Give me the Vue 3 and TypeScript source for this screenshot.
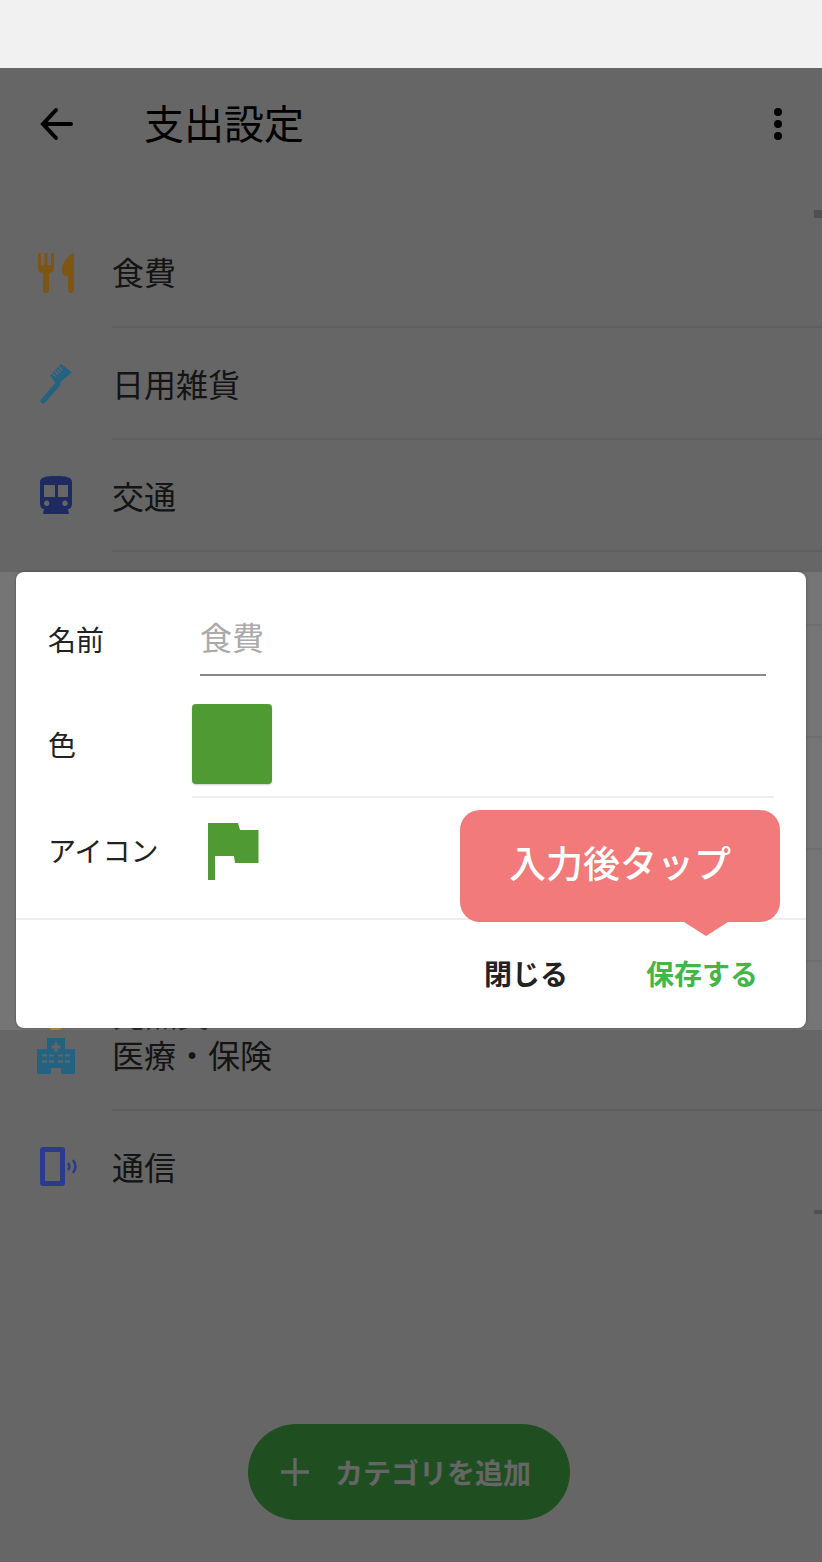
<script setup lang="ts">
interface Category {
  name: string
  icon: 'food' | 'brush' | 'train' | 'hospital' | 'phone'
  color: string
}

// icons sit above the scrim, so these are the already dimmed colours
const topRows: Category[] = [
  { name: '食費', icon: 'food', color: '#7d5514' },
  { name: '日用雑貨', icon: 'brush', color: '#246282' },
  { name: '交通', icon: 'train', color: '#1f2a62' },
]

const bottomRows: Category[] = [
  { name: '医療・保険', icon: 'hospital', color: '#246282' },
  { name: '通信', icon: 'phone', color: '#2b3a8c' },
]
</script>

<template>
  <div class="screen">
    <div class="status-bar"></div>

    <header class="top-bar">
      <svg class="back" viewBox="0 0 36 36" width="36" height="36">
        <path d="M33 18H6M18 4 5 18l13 14" fill="none" stroke="#000" stroke-width="4" stroke-linecap="round" />
      </svg>
      <h1 class="title">支出設定</h1>
      <div class="more"><i></i><i></i><i></i></div>
    </header>

    <div class="scroll-mark first"></div>

    <ul class="rows">
      <li v-for="row in topRows" :key="row.name" class="row">
        <span class="icon">
          <svg viewBox="0 0 48 48" width="48" height="48" :fill="row.color">
            <template v-if="row.icon === 'food'">
              <path d="M6 5h3v12h3.500V5h3v12H19V5h3v15c0 3-2 5-5 5.500V42a3 3 0 0 1-6 0V25.500C8 25 6 23 6 20z" />
              <path d="M42 5v37a3 3 0 0 1-6 0V28h-1c-3 0-5-3-5-6C30 15 36 7 42 5z" />
            </template>
            <template v-else-if="row.icon === 'brush'">
              <path d="M26 24 11 41" fill="none" :stroke="row.color" stroke-width="5" stroke-linecap="round" />
              <path fill-rule="evenodd" d="M29 4 40 12.300 25 25 18 15.700zM20.200 13.900l1-1 3.500 3.500-1 1zM22.300 11.800l1-1 3.500 3.500-1 1zM24.400 9.700l1-1 3.500 3.500-1 1zM26.500 7.600l1-1 3.500 3.500-1 1z" />
            </template>
            <template v-else>
              <path fill-rule="evenodd" d="M8 10c0-5 6-6 16-6s16 1 16 6v22c0 3-2 5-4 5l1 5H11l1-5c-2 0-4-2-4-5zM12 13v12h11V13zM26 13v12h10V13zM14.700 28.600a2.700 2.700 0 1 0 .01 0zM33 28.600a2.700 2.700 0 1 0 .01 0z" />
            </template>
          </svg>
        </span>
        <span class="label">{{ row.name }}</span>
      </li>
    </ul>

    <div class="hidden-rows">
      <div class="hidden-line short"></div>
      <div class="hidden-line"></div>
      <div class="hidden-line"></div>
      <div class="hidden-line"></div>
      <span class="peek-icon"></span>
      <span class="peek">光熱費</span>
    </div>

    <ul class="rows">
      <li v-for="row in bottomRows" :key="row.name" class="row">
        <span class="icon">
          <svg viewBox="0 0 48 48" width="48" height="48" :fill="row.color">
            <template v-if="row.icon === 'hospital'">
              <path fill-rule="evenodd" d="M15 7h18v11h10v25H29v-6H19v6H5V18h10zM22.500 11.500v3h-3v3h3v3h3v-3h3v-3h-3v-3zM10 23.500v2h5v-2zM17 23.500v2h5v-2zM26 23.500v2h5v-2zM33 23.500v2h5v-2zM10 29.500v2h5v-2zM17 29.500v2h5v-2zM26 29.500v2h5v-2zM33 29.500v2h5v-2z" />
            </template>
            <template v-else>
              <path fill-rule="evenodd" d="M11 4h19a3 3 0 0 1 3 3v33a3 3 0 0 1-3 3H11a3 3 0 0 1-3-3V7a3 3 0 0 1 3-3zm2 5v29h15V9z" />
              <path d="M36 20c1.500 2 1.500 5 0 7M41 17c3 4 3 9 0 13" fill="none" :stroke="row.color" stroke-width="2.500" />
            </template>
          </svg>
        </span>
        <span class="label">{{ row.name }}</span>
      </li>
    </ul>

    <div class="scroll-mark last"></div>

    <div class="fab">
      <svg viewBox="0 0 30 30" width="30" height="30">
        <path d="M15 1v28M1 15h28" fill="none" stroke="#fff" stroke-width="3.400" />
      </svg>
      <span>カテゴリを追加</span>
    </div>

    <div class="overlay"></div>
    <div class="band"></div>

    <section class="dialog">
      <div class="form">
        <div class="field name-field">
          <span class="field-label">名前</span>
          <div class="input">食費</div>
        </div>
        <div class="field color-field">
          <span class="field-label">色</span>
          <div class="color-line"><div class="swatch"></div></div>
        </div>
        <div class="field icon-field">
          <span class="field-label">アイコン</span>
          <svg class="flag" viewBox="0 0 52 58" width="52" height="58" fill="#4f9a33">
            <path d="M0 0h30l2 7h18.500v33H27l-1-7H7v24H0z" />
          </svg>
        </div>
      </div>
      <footer class="actions">
        <button class="action close">閉じる</button>
        <button class="action save">保存する</button>
      </footer>
      <div class="tip">入力後タップ</div>
    </section>
  </div>
</template>

<style>
html,
body {
  margin: 0;
  background: #fff;
}
</style>

<style scoped>
.screen {
  position: relative;
  width: 822px;
  height: 1562px;
  overflow: hidden;
  background: #fff;
  font-family: "Noto Sans CJK JP", "Noto Sans", sans-serif;
  color: #333;
}
.status-bar {
  height: 68px;
  background: #f1f1f1;
}
.top-bar {
  display: flex;
  align-items: center;
  height: 112px;
  padding: 0 40px 0 38px;
  color: #000;
}
.back {
  flex: none;
}
.title {
  margin: 0 0 4px 70px;
  font-size: 40px;
  font-weight: 400;
  flex: 1;
}
.more {
  display: flex;
  flex-direction: column;
  gap: 4px;
}
.more i {
  width: 8px;
  height: 8px;
  border-radius: 50%;
  background: #000;
}
.scroll-mark {
  position: absolute;
  right: 0;
  width: 8px;
  background: #c8c8c8;
}
.scroll-mark.first {
  top: 210px;
  height: 8px;
}
.scroll-mark.last {
  top: 1210px;
  height: 4px;
}
.rows {
  list-style: none;
  margin: 0;
  padding: 0;
}
.rows:first-of-type {
  margin-top: 36px;
}
.row {
  display: flex;
  align-items: center;
  height: 112px;
}
.icon {
  position: relative;
  z-index: 1;
  flex: none;
  display: flex;
  justify-content: center;
  width: 112px;
}
.label {
  flex: 1;
  align-self: stretch;
  display: flex;
  align-items: center;
  font-size: 32px;
  border-bottom: 2px solid #eee;
}
.row:last-child .label {
  border-bottom-color: transparent;
}
.rows:first-of-type .row:last-child .label {
  border-bottom-color: #eee;
}
.hidden-rows {
  position: relative;
  height: 447px;
}
.hidden-line {
  margin-left: 112px;
  height: 110px;
  border-bottom: 2px solid #eee;
}
.hidden-line.short {
  height: 72px;
}
.peek {
  position: absolute;
  left: 113px;
  top: 445px;
  font-size: 32px;
  line-height: 32px;
}
.peek-icon {
  position: absolute;
  z-index: 1;
  left: 48px;
  top: 468px;
  width: 15px;
  height: 10px;
  border-radius: 0 0 5px 5px;
  background: #b8963a;
}
.fab {
  position: absolute;
  left: 248px;
  top: 1424px;
  width: 322px;
  height: 96px;
  box-sizing: border-box;
  padding-left: 32px;
  display: flex;
  align-items: center;
  gap: 25px;
  border-radius: 48px;
  background: #4ec550;
  color: #fff;
  font-size: 28px;
  font-weight: 700;
}
.overlay {
  position: absolute;
  top: 68px;
  left: 0;
  right: 0;
  bottom: 0;
  background: rgba(0, 0, 0, 0.6);
}
.band {
  position: absolute;
  top: 572px;
  left: 0;
  right: 0;
  height: 458px;
  background: rgba(255, 255, 255, 0.1);
}
.dialog {
  position: absolute;
  z-index: 2;
  top: 572px;
  left: 16px;
  width: 790px;
  height: 456px;
  border-radius: 8px;
  background: #fff;
  box-shadow: 0 0 3px rgba(0, 0, 0, 0.35);
  display: flex;
  flex-direction: column;
}
.form {
  flex: 1;
  padding: 0 32px;
  border-bottom: 2px solid #eee;
}
.field {
  display: flex;
  align-items: center;
}
.field-label {
  width: 144px;
  flex: none;
  font-size: 28px;
  color: #222;
}
.name-field {
  box-sizing: border-box;
  height: 132px;
  align-items: flex-start;
  padding-top: 47px;
}
.input {
  flex: 1;
  margin: -6px 8px 0;
  height: 61px;
  font-size: 32px;
  color: #aaa;
  border-bottom: 2px solid #888;
}
.color-field {
  align-items: flex-start;
}
.color-field .field-label {
  line-height: 80px;
}
.color-line {
  width: 582px;
  padding-bottom: 12px;
  border-bottom: 2px solid #eee;
}
.swatch {
  width: 80px;
  height: 80px;
  border-radius: 4px;
  background: #4f9a33;
  box-shadow: 0 1px 2px rgba(0, 0, 0, 0.2);
}
.icon-field {
  margin-top: 14px;
  height: 76px;
}
.flag {
  margin: 3px 0 0 16px;
}
.actions {
  height: 108px;
  flex: none;
  display: flex;
  justify-content: flex-end;
  align-items: center;
  gap: 78px;
  padding: 0 48px 2px 0;
  box-sizing: border-box;
}
.action {
  border: 0;
  padding: 0;
  background: none;
  font: 700 28px "Noto Sans CJK JP", sans-serif;
}
.close {
  color: #222;
}
.save {
  color: #43b649;
}
.tip {
  position: absolute;
  left: 444px;
  top: 238px;
  box-sizing: border-box;
  width: 320px;
  height: 112px;
  padding-bottom: 8px;
  border-radius: 20px;
  background: #f27a7a;
  color: #fff;
  font-size: 37px;
  font-weight: 500;
  display: flex;
  align-items: center;
  justify-content: center;
}
.tip::after {
  content: "";
  position: absolute;
  left: 224px;
  bottom: -14px;
  border-left: 22px solid transparent;
  border-right: 22px solid transparent;
  border-top: 14px solid #f27a7a;
}
</style>
